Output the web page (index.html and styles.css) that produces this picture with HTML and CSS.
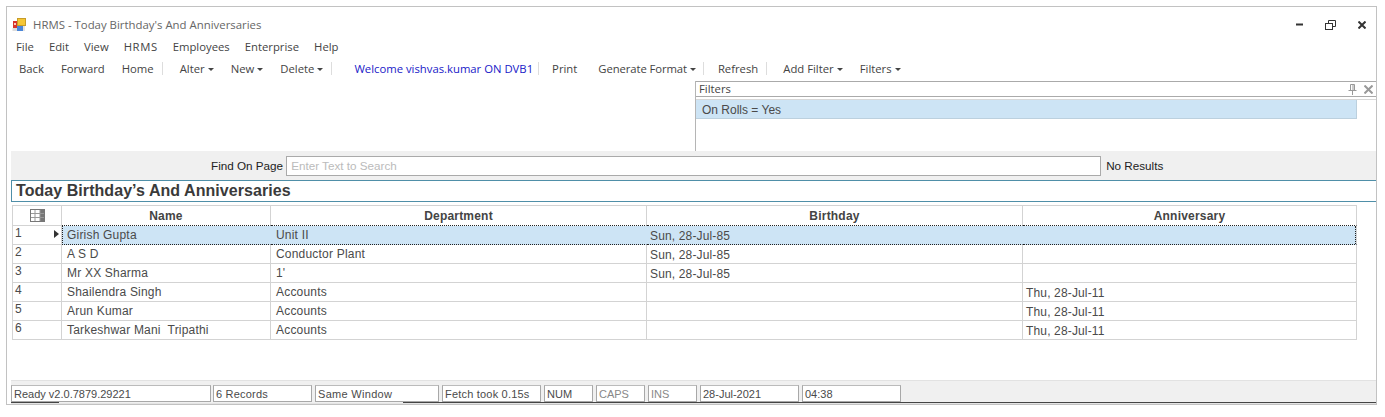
FILE: index.html
```html
<!DOCTYPE html>
<html>
    <head>
        <meta charset="utf-8">
        <meta name="viewport" content="width=device-width, initial-scale=1.0">
        <title>HRMS</title>
        <link rel="stylesheet" href="styles.css">
    </head>
    <body>
        <div class="window">
            <div class="titlebar">
                <svg class="app-icon" width="14" height="14" viewBox="0 0 14 14">
                    <rect x="1" y="3" width="4" height="7" fill="#d8342a" />
                    <rect x="2" y="5" width="2" height="2" fill="#f6c9c0" />
                    <rect x="0.5" y="10" width="5" height="3" fill="#dcdcdc" />
                    <rect x="5.5" y="0.5" width="8" height="7" fill="#f5c635" stroke="#c79c28" />
                    <rect x="5" y="8" width="6" height="5" fill="#4a86d8" />
                    <rect x="11" y="8" width="2" height="5" fill="#e4e4e4" />
                </svg>
                <span class="title-text">HRMS - Today Birthday's And Anniversaries</span>
                <div class="win-buttons">
                    <svg width="7" height="3" viewBox="0 0 7 3"><rect y="0.5" width="7" height="2" fill="#333" /></svg>
                    <svg width="11" height="10" viewBox="0 0 11 10" fill="none" stroke="#333">
                        <path d="M3.5 3V0.5H10.5V6.5H7.5" />
                        <rect x="0.5" y="3.5" width="7" height="6" />
                    </svg>
                    <svg width="8" height="8" viewBox="0 0 8 8" stroke="#333" stroke-width="2"><path d="M0.5 0.5L7.5 7.5M7.5 0.5L0.5 7.5" /></svg>
                </div>
            </div>

            <div class="menubar">
                <span>File</span>
                <span>Edit</span>
                <span>View</span>
                <span class="menu-hrms">HRMS</span>
                <span>Employees</span>
                <span>Enterprise</span>
                <span>Help</span>
            </div>

            <div class="toolbar">
                <span class="tool">Back</span>
                <span class="tool">Forward</span>
                <span class="tool">Home</span>
                <i class="sep"></i>
                <span class="tool drop">Alter</span>
                <span class="tool drop">New</span>
                <span class="tool drop">Delete</span>
                <i class="sep"></i>
                <span class="tool welcome">Welcome vishvas.kumar ON DVB1</span>
                <i class="sep"></i>
                <span class="tool print">Print</span>
                <span class="tool drop generate">Generate Format</span>
                <i class="sep"></i>
                <span class="tool refresh">Refresh</span>
                <i class="sep"></i>
                <span class="tool drop">Add Filter</span>
                <span class="tool drop">Filters</span>
            </div>

            <div class="upper">
                <div class="filters">
                    <div class="filters-head">
                        <span>Filters</span>
                        <svg width="9" height="11" viewBox="0 0 9 11" fill="none" stroke="#999">
                            <path d="M2.5 0.5H6.5V6.5H2.5ZM0.5 6.5H8.5M4.5 6.5V11M5 1V6" />
                        </svg>
                        <svg width="9" height="9" viewBox="0 0 9 9" stroke="#999" stroke-width="2"><path d="M0.5 0.5L8.5 8.5M8.5 0.5L0.5 8.5" /></svg>
                    </div>
                    <div class="filter-list">
                        <div class="filter-item">On Rolls = Yes</div>
                    </div>
                </div>
            </div>

            <div class="content">
                <div class="findbar">
                    <span class="find-label">Find On Page</span>
                    <div class="find-input">Enter Text to Search</div>
                    <span class="find-result">No Results</span>
                </div>
                <div class="report-title">Today Birthday’s And Anniversaries</div>

                <div class="grid-wrap">
                    <table class="grid">
                        <colgroup>
                            <col class="c-head">
                            <col class="c-name">
                            <col class="c-dept">
                            <col class="c-date">
                            <col class="c-anni">
                        </colgroup>
                        <thead>
                            <tr>
                                <th>
                                    <svg width="15" height="13" viewBox="0 0 15 13">
                                        <rect x="0.5" y="0.5" width="14" height="12" fill="#fff" stroke="#777" />
                                        <rect x="10" y="1" width="4" height="11" fill="#777" />
                                        <path d="M5 1V12M10 1V12M1 4.5H14M1 8.5H14" stroke="#999" fill="none" />
                                    </svg>
                                </th>
                                <th>Name</th>
                                <th>Department</th>
                                <th>Birthday</th>
                                <th>Anniversary</th>
                            </tr>
                        </thead>
                        <tbody>
                            <tr class="selected">
                                <td class="row-no">1<b class="arrow"></b></td>
                                <td>Girish Gupta</td>
                                <td>Unit II</td>
                                <td>Sun, 28-Jul-85</td>
                                <td></td>
                            </tr>
                            <tr>
                                <td class="row-no">2</td>
                                <td>A S D</td>
                                <td>Conductor Plant</td>
                                <td>Sun, 28-Jul-85</td>
                                <td></td>
                            </tr>
                            <tr>
                                <td class="row-no">3</td>
                                <td>Mr XX Sharma</td>
                                <td>1'</td>
                                <td>Sun, 28-Jul-85</td>
                                <td></td>
                            </tr>
                            <tr>
                                <td class="row-no">4</td>
                                <td>Shailendra Singh</td>
                                <td>Accounts</td>
                                <td></td>
                                <td>Thu, 28-Jul-11</td>
                            </tr>
                            <tr>
                                <td class="row-no">5</td>
                                <td>Arun Kumar</td>
                                <td>Accounts</td>
                                <td></td>
                                <td>Thu, 28-Jul-11</td>
                            </tr>
                            <tr>
                                <td class="row-no">6</td>
                                <td>Tarkeshwar Mani&nbsp; Tripathi</td>
                                <td>Accounts</td>
                                <td></td>
                                <td>Thu, 28-Jul-11</td>
                            </tr>
                        </tbody>
                    </table>
                </div>

                <div class="statusbar">
                    <span class="panel p-ready">Ready v2.0.7879.29221</span>
                    <span class="panel p-records">6 Records</span>
                    <span class="panel p-window">Same Window</span>
                    <span class="panel p-fetch">Fetch took 0.15s</span>
                    <span class="panel p-key">NUM</span>
                    <span class="panel p-key dim">CAPS</span>
                    <span class="panel p-key dim">INS</span>
                    <span class="panel p-date">28-Jul-2021</span>
                    <span class="panel p-date">04:38</span>
                </div>
            </div>
        </div>
    </body>
</html>
```

FILE: styles.css
```css
body{
    margin: 0;
    background: #fff;
    color: #444;
    font-family: "Open Sans", sans-serif;
    font-size: 11.3px;
    overflow: hidden;
}
svg{
    display: block;
    flex: none;
}
.window{
    box-sizing: border-box;
    width: 1371px;
    height: 399px;
    margin: 6px 0 0 6px;
    border: 1px solid #c2c2c2;
    display: flex;
    flex-direction: column;
}

/* title, menu, toolbar */
.titlebar{
    height: 29px;
    display: flex;
    align-items: center;
    padding: 6px 0 0 5px;
    box-sizing: border-box;
    color: #666;
}
.title-text{
    margin-left: 7px;
    font-size: 11.4px;
}
.win-buttons{
    margin-left: auto;
    margin-right: 10px;
    display: flex;
    align-items: center;
    gap: 22px;
}
.menubar{
    height: 21px;
    display: flex;
    align-items: center;
    gap: 15px;
    padding-left: 9px;
}
.menu-hrms{
    letter-spacing: 0.6px;
}
.toolbar{
    height: 24px;
    box-sizing: border-box;
    padding: 0 0 2px 12px;
    display: flex;
    align-items: center;
}
.tool{
    margin-right: 17px;
    white-space: nowrap;
}
.drop::after{
    content: "";
    display: inline-block;
    margin-left: 3px;
    vertical-align: 2px;
    border: 3px solid transparent;
    border-top-color: #444;
    border-bottom: 0;
}
.sep{
    width: 1px;
    height: 13px;
    background: #ddd;
    margin-left: -9px;
    margin-right: 17px;
}
.welcome{
    color: #2020c8;
    margin-left: 5px;
    margin-right: 14px;
}
.welcome + .sep{
    margin-right: 13px;
}
.print{
    margin-right: 21px;
}
.generate{
    letter-spacing: -0.1px;
    margin-right: 16px;
}
.generate + .sep{
    margin-right: 14px;
}
.refresh + .sep{
    margin-right: 16px;
}

/* filter panel */
.upper{
    height: 70px;
    display: flex;
    justify-content: flex-end;
}
.filters{
    width: 681px;
    box-sizing: border-box;
    border-left: 1px solid #b5b5b5;
}
.filters-head{
    height: 14px;
    border-top: 1px solid #aaa;
    border-bottom: 1px solid #aaa;
    display: flex;
    align-items: center;
    gap: 7px;
    padding: 0 3px;
}
.filters-head span{
    margin-right: auto;
    margin-bottom: 2px;
}
.filter-list{
    margin-top: 2px;
    border-top: 1px solid #d8d8d8;
}
.filter-item{
    width: 661px;
    height: 19px;
    line-height: 20px;
    box-sizing: border-box;
    padding-left: 6px;
    background: #cde4f5;
    font-family: "Liberation Sans", sans-serif;
    font-size: 12px;
    color: #4a4a4a;
    border-bottom: 1px solid #bcd0de;
    border-right: 1px solid #bcd0de;
}

/* main content */
.content{
    flex: 1;
    margin-left: 4px;
    display: flex;
    flex-direction: column;
    font-family: "Liberation Sans", sans-serif;
    font-size: 12px;
    letter-spacing: 0.2px;
    color: #4a4a4a;
}
.findbar{
    height: 29px;
    background: #f0f0f0;
    display: flex;
    align-items: center;
    box-sizing: border-box;
    padding-left: 200px;
    color: #222;
    font-size: 11.7px;
    letter-spacing: 0;
}
.find-input{
    width: 815px;
    height: 20px;
    margin-left: 3px;
    box-sizing: border-box;
    padding-left: 4px;
    line-height: 18px;
    background: #fff;
    border: 1px solid #aaa;
    color: #bbb;
}
.find-result{
    margin-left: 5px;
}
.report-title{
    height: 22px;
    line-height: 20px;
    box-sizing: border-box;
    border: 1px solid #4f8fa8;
    border-right: 0;
    padding-left: 4px;
    font-size: 16px;
    font-weight: bold;
    letter-spacing: 0.06px;
    color: #3a3a3a;
}
.grid-wrap{
    flex: 1;
    padding: 3px 0 0 1px;
}
.grid{
    table-layout: fixed;
    border-collapse: separate;
    border-spacing: 0;
    width: 1345px;
}
.c-head{ width: 50px; }
.c-name{ width: 209px; }
.c-dept{ width: 376px; }
.c-date{ width: 376px; }
.c-anni{ width: 334px; }
.grid th,
.grid td{
    border-right: 1px solid #d3d3d3;
    border-bottom: 1px solid #d3d3d3;
    padding: 0 0 0 5px;
    height: 18px;
    line-height: 16px;
    white-space: nowrap;
}
.grid td:nth-child(n+4){
    padding-left: 3px;
    vertical-align: bottom;
    letter-spacing: 0.15px;
}
.grid th{
    height: 19px;
    padding: 0;
    text-align: center;
    border-top: 1px solid #d3d3d3;
    color: #444;
}
.grid th:first-child,
.grid td:first-child{
    border-left: 1px solid #d3d3d3;
}
.grid th:not(:first-child){
    border-bottom: 1px dotted #222;
}
.grid th svg{
    margin: 0 auto;
}
.grid .row-no{
    position: relative;
    vertical-align: top;
    padding-left: 2px;
    line-height: 15px;
}
.arrow{
    position: absolute;
    right: 2px;
    top: 4px;
    border-left: 5px solid #333;
    border-top: 4px solid transparent;
    border-bottom: 4px solid transparent;
}
.selected td:not(.row-no){
    background: #cde4f5;
    border-right-color: #cde4f5;
    border-bottom: 1px dotted #222;
}
.selected td:nth-child(2){
    border-left: 1px dotted #222;
    padding-left: 4px;
}
.selected td:last-child{
    position: relative;
    border-right-color: #d3d3d3;
}
.selected td:last-child::after{
    content: "";
    position: absolute;
    top: 0;
    right: 0;
    bottom: 0;
    border-right: 1px dotted #222;
}

/* status bar */
.statusbar{
    height: 24px;
    box-sizing: border-box;
    border-top: 1px solid #e2e2e2;
    border-bottom: 1px solid #e4e4e4;
    background:
        linear-gradient(#444, #444) 0 100% / 48px 1px no-repeat,
        linear-gradient(#444, #444) 392px 100% / 100% 1px no-repeat,
        #f0f0f0;
    display: flex;
    align-items: flex-start;
    gap: 3px;
    padding-top: 4px;
    font-size: 11px;
    letter-spacing: 0;
}
.panel{
    box-sizing: border-box;
    height: 17px;
    line-height: 17px;
    padding-left: 2px;
    background: #fff;
    border: 1px solid #a8a8a8;
    border-top-color: #bbb;
    white-space: nowrap;
    overflow: hidden;
}
.p-ready{ width: 200px; margin-right: -1px; }
.p-records{ width: 99px; letter-spacing: 0.2px; }
.p-window{ width: 124px; letter-spacing: 0.3px; }
.p-fetch{ width: 99px; letter-spacing: 0.2px; }
.p-key{ width: 49px; }
.p-date{ width: 99px; }
.dim{ color: #888; }
```
